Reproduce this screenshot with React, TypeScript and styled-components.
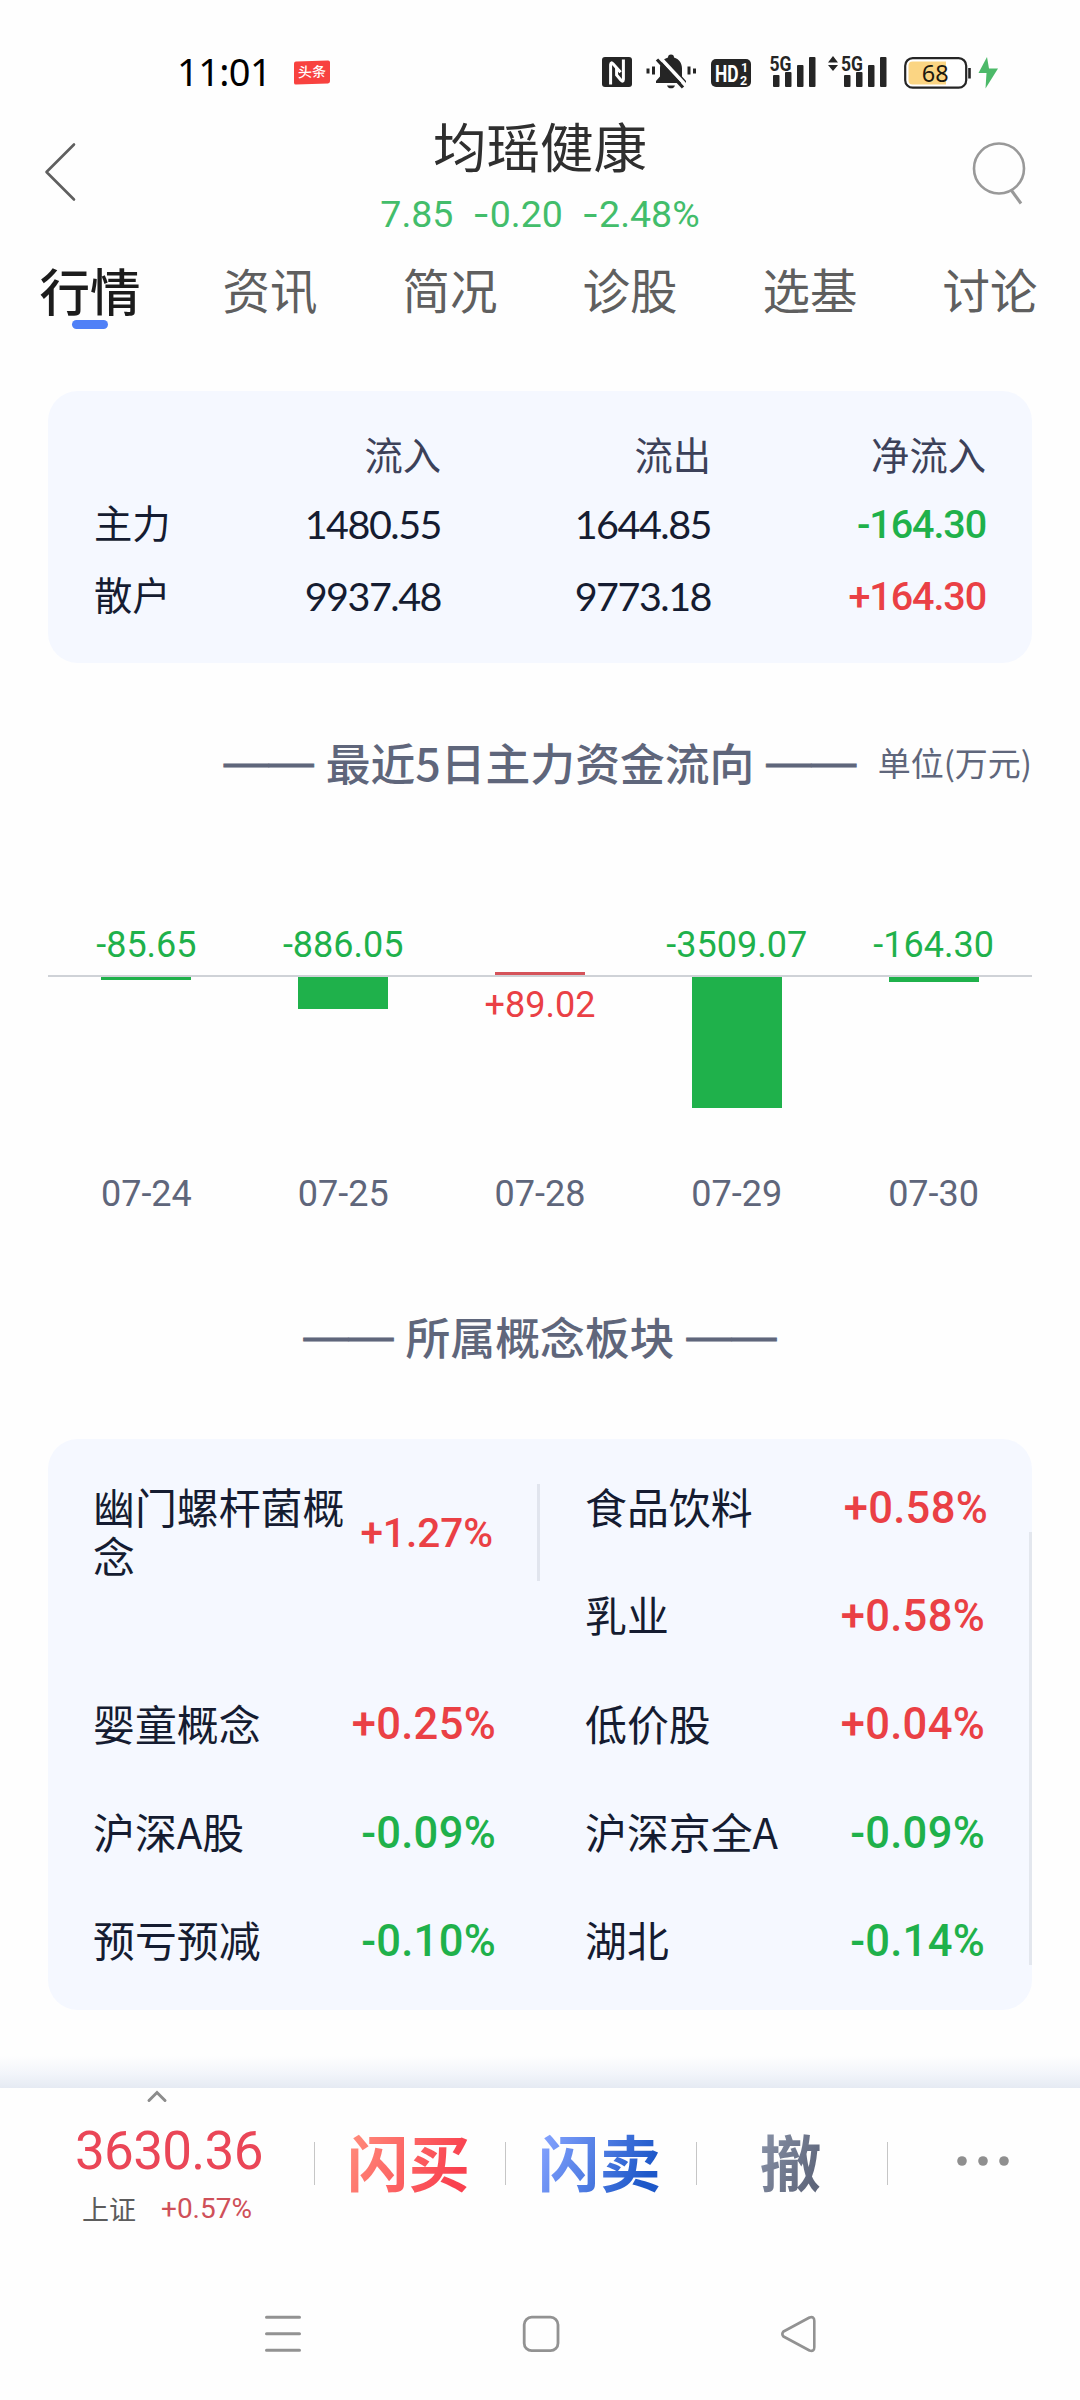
import React from "react";
import styled, { createGlobalStyle } from "styled-components";

const GREEN = "#1fb14b";
const RED = "#ea4045";
const SLATE = "#5f667b";
const CJK = `"Noto Sans CJK SC", sans-serif`;

const GlobalStyle = createGlobalStyle`
  * { box-sizing: border-box; }
  body { margin: 0; background: #fefefe; font-family: Roboto, ${CJK}; }
  button { border: 0; padding: 0; background: none; font: inherit; color: inherit; }
`;

const Screen = styled.main`
  width: 1080px;
  height: 2400px;
  overflow: hidden;
  display: flex;
  flex-direction: column;
  background: #fefefe;

  & > * { flex-shrink: 0; }
`;

/* ---------- status bar ---------- */

const StatusBar = styled.div`
  height: 112px;
  padding: 52px 78px 0 177px;
  display: flex;
  align-items: flex-start;
`;

const Clock = styled.span`
  width: 117px;
  margin-top: -2px;
  font: 400 38px/42px "Noto Sans", sans-serif;
  letter-spacing: -0.600px;
  color: #000;
`;

const NewsBadge = styled.span`
  width: 36px;
  height: 23px;
  margin-top: 9px;
  border-radius: 2px;
  background: #f8423f;
  color: #fff;
  font: 500 14px/21px ${CJK};
  text-align: center;
  transform: skewY(-2deg);
`;

const StatusIcons = styled.div`
  margin-left: auto;
  height: 42px;
  display: flex;
  align-items: flex-start;
`;

const Glyph = styled.svg<{ $gap?: number }>`
  display: block;
  flex: none;
  margin-left: ${(p) => p.$gap ?? 0}px;
`;

function SignalBars({ x }: { x: number }) {
  return (
    <g fill="#252525">
      <rect x={x} y="23" width="6.5" height="12" rx="1" />
      <rect x={x + 12} y="20" width="6.5" height="15" rx="1" />
      <rect x={x + 24} y="13" width="6.5" height="22" rx="1" />
      <rect x={x + 36} y="5" width="6.5" height="30" rx="1" />
    </g>
  );
}

function StatusGlyphs() {
  return (
    <StatusIcons>
      <Glyph width="30" height="36" viewBox="0 0 30 36">
        <rect y="5" width="30" height="30" rx="3" fill="#252525" />
        <path d="M8.600 32.500V12.500Q8.800 9.500 11.200 12L18.600 20.200" fill="none" stroke="#fff" strokeWidth="3" />
        <path d="M21.400 7.500V27.500Q21.200 30.500 18.800 28L14.600 23V16" fill="none" stroke="#fff" strokeWidth="3" />
      </Glyph>
      <Glyph $gap={14} width="50" height="38" viewBox="0 0 50 38">
        <path d="M22 5.500a3 3 0 0 1 6 0c5 1.500 8 5.500 8 11v8l4 4.500v2H10v-2l4-4.500v-8c0-5.500 3-9.500 8-11z" fill="#252525" />
        <path d="M21 33.500h8c-.8 2-2 2.800-4 2.800s-3.200-.8-4-2.800z" fill="#252525" />
        <path d="M13.500 5L39.500 33" stroke="#fefefe" strokeWidth="3.500" />
        <path d="M11 7.500L37 35.500" stroke="#252525" strokeWidth="3.200" />
        <path d="M2 16.500v5M7.500 14.500v8M43 14.500v8M48.500 16.500v5" stroke="#252525" strokeWidth="3" />
      </Glyph>
      <Glyph $gap={15} width="40" height="36" viewBox="0 0 40 36">
        <rect y="7" width="40" height="28" rx="5" fill="#252525" />
        <g fill="#fff" fontFamily="Roboto, sans-serif" fontWeight="700">
          <text x="4" y="29.500" fontSize="23" textLength="23.500" lengthAdjust="spacingAndGlyphs">HD</text>
          <text x="30" y="20" fontSize="12.500">1</text>
          <text x="29" y="32.500" fontSize="12.500">2</text>
        </g>
      </Glyph>
      <Glyph $gap={18} width="48" height="36" viewBox="0 0 48 36">
        <text x="0.500" y="18.500" fontFamily="Roboto, sans-serif" fontWeight="700" fontSize="21" fill="#252525" textLength="22" lengthAdjust="spacingAndGlyphs">5G</text>
        <SignalBars x={4} />
      </Glyph>
      <Glyph $gap={11} width="60" height="36" viewBox="0 0 60 36">
        <path d="M0 10.500L5 4l5 6.500zM0 13h10l-5 6z" fill="#252525" />
        <text x="13" y="18.500" fontFamily="Roboto, sans-serif" fontWeight="700" fontSize="21" fill="#252525" textLength="22" lengthAdjust="spacingAndGlyphs">5G</text>
        <SignalBars x={16} />
      </Glyph>
      <Glyph $gap={16} width="98" height="38" viewBox="0 0 98 38">
        <rect x="1.200" y="6.200" width="61" height="29.500" rx="7.500" fill="#fff" stroke="#252525" strokeWidth="2.200" />
        <path d="M8.500 9.500H42v23H8.500a4 4 0 0 1-4-4v-15a4 4 0 0 1 4-4z" fill="#fbd583" />
        <path d="M65.500 16v10.500" stroke="#252525" strokeWidth="2.600" />
        <text x="17.800" y="29.500" fontFamily="'Noto Sans', sans-serif" fontSize="23.500" fill="#1d1a10">68</text>
        <path d="M83 5L74.500 21h8L81.500 36.500 94 16.500h-9z" fill="#4cb969" />
      </Glyph>
    </StatusIcons>
  );
}

/* ---------- header ---------- */

const Header = styled.header`
  height: 144px;
  padding: 0 42px;
  display: grid;
  grid-template-columns: 60px 1fr 60px;
`;

const BackButton = styled.button`
  padding-top: 29px;
  display: flex;
`;

const SearchButton = styled.button`
  padding-top: 28px;
  display: flex;
  justify-content: flex-end;
`;

const StockTitle = styled.div`
  display: flex;
  flex-direction: column;
  align-items: center;
`;

const StockName = styled.h1`
  margin: 1px 0 0;
  font: 400 53.500px/64px ${CJK};
  color: #2f2f2f;
`;

const Quote = styled.div`
  display: flex;
  gap: 19px;
  font: 400 37.500px/44px Roboto, sans-serif;
  margin-top: 15px;
  color: #43bd6b;
`;

const Minus = styled.span`
  font-family: Inter, sans-serif;
`;

const Tabs = styled.nav`
  height: 135px;
  display: grid;
  grid-template-columns: repeat(6, 180px);
`;

const Tab = styled.button<{ $active?: boolean }>`
  height: 84px;
  display: flex;
  flex-direction: column;
  align-items: center;
  font: ${(p) => (p.$active ? "500 50.500px" : "400 47.500px")}/66px ${CJK};
  color: ${(p) => (p.$active ? "#1c1c1c" : "#5f5f5f")};

  &::after {
    content: "";
    width: 36px;
    height: 9px;
    margin-top: -2px;
    border-radius: 5px;
    background: ${(p) => (p.$active ? "#4f80f7" : "transparent")};
  }
`;

/* ---------- flow summary ---------- */

const Card = styled.section`
  margin: 0 48px;
  border-radius: 30px;
  background: #f5f8ff;
`;

const FlowTable = styled(Card)`
  height: 272px;
  padding: 29px 46px 0;
`;

const FlowRow = styled.div<{ $height: number }>`
  height: ${(p) => p.$height}px;
  display: grid;
  grid-template-columns: 149px 198px 270px 275px;
  align-items: center;
  font: 400 38.300px/1 ${CJK};
  color: #151c31;
`;

const ColumnHead = styled.span`
  text-align: right;
  color: #3c4159;
`;

const Amount = styled.span`
  padding-top: 3px;
  text-align: right;
  font: 400 39.500px/40px Lato, sans-serif;
  letter-spacing: -1.500px;
`;

const NetAmount = styled.span<{ $up?: boolean }>`
  padding-top: 4px;
  text-align: right;
  font: 500 39.500px/40px Roboto, sans-serif;
  letter-spacing: -1.100px;
  color: ${(p) => (p.$up ? RED : GREEN)};
`;

const SectionTitle = styled.div<{ $top: number }>`
  margin: ${(p) => p.$top}px 48px 0;
  height: 60px;
  display: grid;
  grid-template-columns: 1fr auto 1fr;
  align-items: center;
  color: ${SLATE};
`;

const SectionText = styled.h2`
  grid-column: 2;
  margin: 0;
  display: flex;
  justify-content: center;
  gap: 12px;
  font: 500 44.800px/60px ${CJK};
`;

const Dash = styled.span`
  font: 400 45px/60px "Liberation Sans", sans-serif;
  -webkit-text-stroke: 0.800px ${SLATE};
`;

const Unit = styled.span`
  text-align: right;
  font: 400 33px/60px ${CJK};
`;

/* ---------- chart ---------- */

const Chart = styled.section`
  margin: 131px 48px 0;
  height: 293px;
  display: grid;
  grid-template-columns: repeat(5, 1fr);
`;

const Day = styled.div`
  display: flex;
  flex-direction: column;
  align-items: center;
  font: 400 36px/44px Roboto, sans-serif;
`;

const AboveAxis = styled.div`
  width: 100%;
  height: 52px;
  display: flex;
  flex-direction: column;
  align-items: center;
  color: ${GREEN};
`;

const BelowAxis = styled.div`
  width: 100%;
  height: 197px;
  border-top: 2px solid #cfd2d7;
  display: flex;
  flex-direction: column;
  align-items: center;
  color: ${RED};
`;

const Rise = styled.i`
  width: 90px;
  margin-top: auto;
  background: #d5535a;
`;

const Fall = styled.i`
  width: 90px;
  background: ${GREEN};
`;

const RiseLabel = styled.span`
  margin-top: 6px;
`;

const DateLabel = styled.span`
  color: ${SLATE};
`;

/* ---------- concept boards ---------- */

const BoardCard = styled(Card)`
  position: relative;
  height: 571px;
  margin-top: 73px;
  padding-top: 15px;
  display: grid;
  grid-template-columns: 492px 492px;
  grid-template-rows: repeat(5, 108.200px);
`;

const ScrollThumb = styled.i`
  position: absolute;
  right: 0;
  top: 93px;
  width: 3px;
  height: 433px;
  background: #e3e7ee;
`;

const Board = styled.div<{ $tall?: boolean; $inset: number }>`
  grid-row: span ${(p) => (p.$tall ? 2 : 1)};
  height: ${(p) => (p.$tall ? 97 : 108)}px;
  margin-top: ${(p) => (p.$tall ? 30 : 0)}px;
  border-right: ${(p) => (p.$tall ? "3px solid #e1e5ee" : "0")};
  padding: 0 ${(p) => p.$inset}px 0 45px;
  display: flex;
  align-items: center;
  justify-content: space-between;
  color: #151c31;
`;

const BoardName = styled.span<{ $wrap?: boolean }>`
  flex: none;
  width: ${(p) => (p.$wrap ? "254px" : "auto")};
  margin-top: -3px;
  font: 400 41.900px/48.600px ${CJK};
`;

const Change = styled.span<{ $up: boolean; $small?: boolean }>`
  font: 500 ${(p) => (p.$small ? 40.5 : 43.5)}px/48px Roboto, sans-serif;
  padding-top: ${(p) => (p.$small ? 0 : 2)}px;
  letter-spacing: ${(p) => (p.$small ? 0 : 0.3)}px;
  color: ${(p) => (p.$up ? RED : GREEN)};
`;

/* ---------- trade bar ---------- */

const FadeEdge = styled.div`
  height: 32px;
  margin-top: 46px;
  background: linear-gradient(#fefefe, #f2f5fa 55%, #e5eaf3);
`;

const TradeBar = styled.footer`
  height: 190px;
  display: grid;
  grid-template-columns: 314px 191px 191px 191px 193px;
  background: #fefefe;
`;

const IndexPanel = styled.div`
  display: flex;
  flex-direction: column;
  padding-left: 75px;
`;

const IndexValue = styled.span`
  margin-top: 15px;
  font: 400 53px/60px Roboto, sans-serif;
  letter-spacing: -0.700px;
  color: #ea4657;
`;

const IndexMeta = styled.div`
  display: flex;
  padding-left: 7px;
  gap: 25px;
  margin-top: 8px;
  font: 400 27px/40px ${CJK};
  color: #5c5c5c;
`;

const IndexChange = styled.span`
  font: 400 28px/40px Roboto, sans-serif;
  color: #cf5059;
`;

const Action = styled.button`
  height: 145px;
  display: flex;
  align-items: center;
  justify-content: center;
  background: linear-gradient(#c6c6c6, #c6c6c6) 0 54px / 1px 43px no-repeat;
`;

const ActionText = styled.span<{ $from: string; $to: string }>`
  margin-left: -2px;
  font: 700 61.500px/70px ${CJK};
  background: linear-gradient(115deg, ${(p) => p.$from} 10%, ${(p) => p.$to} 85%);
  background-clip: text;
  -webkit-background-clip: text;
  color: transparent;
`;

const NavBar = styled.div`
  display: flex;
  justify-content: space-between;
  padding: 36px 262px 0 263px;
`;

const days = [
  { date: "07-24", value: "-85.65", bar: 2.5 },
  { date: "07-25", value: "-886.05", bar: 32 },
  { date: "07-28", value: "+89.02", bar: 3 },
  { date: "07-29", value: "-3509.07", bar: 130.5 },
  { date: "07-30", value: "-164.30", bar: 5 },
];

const boards = [
  { name: "幽门螺杆菌概念", change: "+1.27%", inset: 44 },
  { name: "食品饮料", change: "+0.58%", inset: 44 },
  { name: "乳业", change: "+0.58%", inset: 47 },
  { name: "婴童概念", change: "+0.25%", inset: 44 },
  { name: "低价股", change: "+0.04%", inset: 47 },
  { name: "沪深A股", change: "-0.09%", inset: 44 },
  { name: "沪深京全A", change: "-0.09%", inset: 47 },
  { name: "预亏预减", change: "-0.10%", inset: 44 },
  { name: "湖北", change: "-0.14%", inset: 47 },
];

export default function App() {
  return (
    <Screen>
      <GlobalStyle />
      <StatusBar>
        <Clock>11:01</Clock>
        <NewsBadge>头条</NewsBadge>
        <StatusGlyphs />
      </StatusBar>

      <Header>
        <BackButton>
          <Glyph width="36" height="62" viewBox="0 0 36 62" fill="none" stroke="#5f5f5f" strokeWidth="2.600" strokeLinecap="round" strokeLinejoin="round">
            <path d="M32 3.500L4.500 31 32 58.500" />
          </Glyph>
        </BackButton>
        <StockTitle>
          <StockName>均瑶健康</StockName>
          <Quote>
            <span>7.85</span>
            <span><Minus>-</Minus>0.20</span>
            <span><Minus>-</Minus>2.48%</span>
          </Quote>
        </StockTitle>
        <SearchButton>
          <Glyph width="66" height="66" viewBox="0 0 66 66" fill="none" stroke="#999" strokeWidth="2.600">
            <circle cx="27" cy="28.500" r="25" />
            <path d="M39.500 50.500L49 63.500" strokeWidth="3" />
          </Glyph>
        </SearchButton>
      </Header>

      <Tabs>
        {["行情", "资讯", "简况", "诊股", "选基", "讨论"].map((t, i) => (
          <Tab key={t} $active={i === 0}>{t}</Tab>
        ))}
      </Tabs>

      <FlowTable>
        <FlowRow $height={68}>
          <span />
          <ColumnHead>流入</ColumnHead>
          <ColumnHead>流出</ColumnHead>
          <ColumnHead>净流入</ColumnHead>
        </FlowRow>
        <FlowRow $height={69}>
          <span>主力</span>
          <Amount>1480.55</Amount>
          <Amount>1644.85</Amount>
          <NetAmount>-164.30</NetAmount>
        </FlowRow>
        <FlowRow $height={75}>
          <span>散户</span>
          <Amount>9937.48</Amount>
          <Amount>9773.18</Amount>
          <NetAmount $up>+164.30</NetAmount>
        </FlowRow>
      </FlowTable>

      <SectionTitle $top={69}>
        <SectionText>
          <Dash>——</Dash>
          <span>最近5日主力资金流向</span>
          <Dash>——</Dash>
        </SectionText>
        <Unit>单位(万元)</Unit>
      </SectionTitle>

      <Chart>
        {days.map((d) => {
          const up = d.value.startsWith("+");
          return (
            <Day key={d.date}>
              <AboveAxis>
                {up ? <Rise style={{ height: d.bar }} /> : <span>{d.value}</span>}
              </AboveAxis>
              <BelowAxis>
                {up ? <RiseLabel>{d.value}</RiseLabel> : <Fall style={{ height: d.bar }} />}
              </BelowAxis>
              <DateLabel>{d.date}</DateLabel>
            </Day>
          );
        })}
      </Chart>

      <SectionTitle $top={90}>
        <SectionText>
          <Dash>——</Dash>
          <span>所属概念板块</span>
          <Dash>——</Dash>
        </SectionText>
      </SectionTitle>

      <BoardCard>
        {boards.map((b, i) => (
          <Board key={b.name} $tall={i === 0} $inset={b.inset}>
            <BoardName $wrap={i === 0}>{b.name}</BoardName>
            <Change $up={b.change.startsWith("+")} $small={i === 0}>{b.change}</Change>
          </Board>
        ))}
        <ScrollThumb />
      </BoardCard>

      <FadeEdge />
      <TradeBar>
        <IndexPanel>
          <Glyph $gap={71} width="22" height="18" viewBox="0 0 22 18" fill="none" stroke="#8c8c8c" strokeWidth="3" strokeLinecap="round">
            <path d="M3 12.500l8-8 8 8" />
          </Glyph>
          <IndexValue>3630.36</IndexValue>
          <IndexMeta>
            <span>上证</span>
            <IndexChange>+0.57%</IndexChange>
          </IndexMeta>
        </IndexPanel>
        <Action><ActionText $from="#ff8778" $to="#f9414f">闪买</ActionText></Action>
        <Action><ActionText $from="#7f9ffc" $to="#1d58c9">闪卖</ActionText></Action>
        <Action><ActionText $from="#868fa4" $to="#5e667b">撤</ActionText></Action>
        <Action>
          <Glyph width="54" height="12" viewBox="0 0 54 12" fill="#8f8f8f">
            <circle cx="5" cy="6" r="4.800" />
            <circle cx="26" cy="6" r="4.800" />
            <circle cx="47" cy="6" r="4.800" />
          </Glyph>
        </Action>
      </TradeBar>

      <NavBar>
        <Glyph width="40" height="40" viewBox="0 0 40 40" stroke="#929292" strokeWidth="3" strokeLinecap="round">
          <path d="M3.500 3.300h33M3.500 19.800h33M3.500 36.300h33" />
        </Glyph>
        <Glyph width="40" height="40" viewBox="0 0 40 40" fill="none" stroke="#929292" strokeWidth="2.800">
          <rect x="2.200" y="3.200" width="33.800" height="33.500" rx="7.500" />
        </Glyph>
        <Glyph width="38" height="40" viewBox="0 0 38 40" fill="none" stroke="#929292" strokeWidth="2.600" strokeLinejoin="round">
          <path d="M3.500 17.500L29.500 3.500Q34.300 2 34.300 6.800V33.200Q34.300 38 29.500 36.500L3.500 22.500Q1.200 20 3.500 17.500Z" />
        </Glyph>
      </NavBar>
    </Screen>
  );
}
